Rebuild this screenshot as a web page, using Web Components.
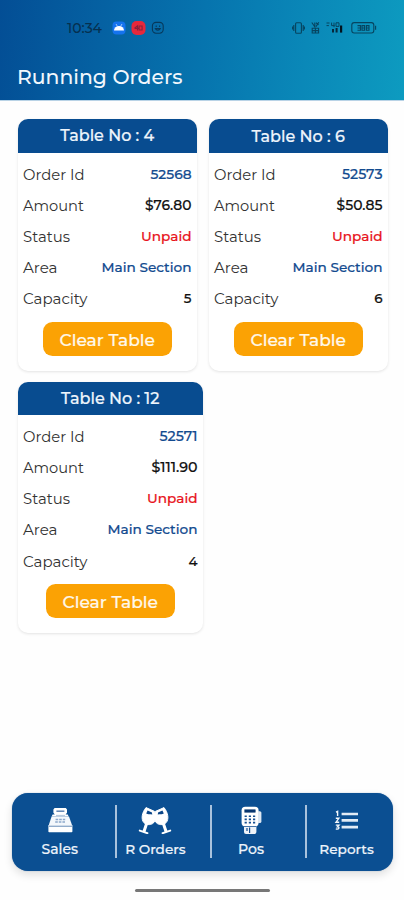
<!DOCTYPE html>
<html lang="en">
<head>
<meta charset="utf-8">
<title>Running Orders</title>
<style>
  html, body { margin: 0; padding: 0; }
  body { width: 404px; height: 900px; overflow: hidden; background: #fefefe; font-family: Montserrat, Inter, "Noto Sans", sans-serif; }
</style>
</head>
<body>
<orders-screen></orders-screen>
<script>
const attach = (el, html) => {
  el.attachShadow({ mode: 'open' }).innerHTML = html;
  return el.shadowRoot;
};

/* A single line of text whose font size is tuned so that it fills the width "w". */
customElements.define('fit-text', class extends HTMLElement {
  connectedCallback() {
    const w = parseFloat(this.getAttribute('w'));
    const root = attach(this, `<style>
      :host { display: block; flex: none; white-space: nowrap; line-height: 20px; height: 20px; }
      span { display: inline-block; }
    </style><span><slot></slot></span>`);
    if (!w) return;
    const span = root.querySelector('span');
    const size = parseFloat(getComputedStyle(span).fontSize);
    span.style.fontSize = size * w / span.getBoundingClientRect().width + 'px';
  }
});

customElements.define('status-bar', class extends HTMLElement {
  connectedCallback() {
    attach(this, `<style>
      :host { display: flex; align-items: center; height: 14px; padding: 21px 27px 0 67px; color: #06304f; }
      fit-text { font-size: 13px; font-weight: 500; width: 35px; }
      svg { display: block; flex: none; }
      .apps { display: flex; gap: 5px; margin-left: 10px; }
      .sys { display: flex; align-items: center; gap: 6px; margin-left: auto; }
    </style>
    <fit-text w="35">10:34</fit-text>
    <div class="apps">
      <svg width="14" height="14" viewBox="0 0 14 14"><rect x=".5" y=".5" width="13" height="13" rx="4" fill="#1473ee"/><path d="M2 9.5a5 4.6 0 0 1 10 0z" fill="#fff"/><path d="M4 3l1.2 2M10 3L8.8 5" stroke="#c5dcfb" stroke-width=".8"/></svg>
      <svg width="15" height="14" viewBox="0 0 14 14"><rect width="14" height="14" rx="5" fill="#e5283c"/><path d="M3 7.2l3-2.4v4.6M7.6 5h3v4h-3zM3 7.4h4.5" fill="none" stroke="#87213c" stroke-width="1.1"/></svg>
      <svg width="14" height="14" viewBox="0 0 14 14" fill="none" stroke="#07395b" stroke-width="1.1"><rect x="1.4" y="1.4" width="10.8" height="10.8" rx="3.6"/><path d="M4.3 7.6c1 2.2 4 2.2 5 0zM5.2 4.6v1.3M8.6 4.6v1.3"/></svg>
    </div>
    <div class="sys">
      <svg width="13" height="14" viewBox="0 0 13 14" fill="none" stroke="#07445f" stroke-width="1.1"><rect x="3.6" y="1.8" width="5.8" height="10.4" rx="1"/><path d="M1.8 4v6M.6 5.5v3M11.2 4v6M12.4 5.5v3"/></svg>
      <svg width="9" height="14" viewBox="0 0 9 14" fill="none" stroke="#07445f" stroke-width="1.1"><path d="M.8 1.5l3 4.2V1.6M5 1.8l2.6 2M7.8 1.2L5 5.6M1.2 7.2h6.4v4.8H1.2zM4.4 7v5M1.2 9.6h6.4"/></svg>
      <svg width="19" height="14" viewBox="0 0 19 14"><path d="M.5 2h3M.5 4.6h2.4M5.6 1.6v3h3M8 1.6v4.6M10 1.8h3v3.6h-3z" fill="none" stroke="#07445f"/><path d="M6 8h2v3.6H6zM9.6 7h2v4.6h-2z" fill="#06283c"/><path d="M14 4.5h2.2v7.1H14z" fill="#02141f"/></svg>
      <svg width="26" height="14" viewBox="0 0 26 14" fill="none" stroke="#07445f" stroke-width="1.1"><rect x=".8" y="1.6" width="22" height="10.4" rx="2.4"/><path d="M24.6 4.8v4M6.5 4.6h3v4.6h-3M6.5 7h3M11 4.6h2.6v4.6H11zM11 7h2.6M15.4 4.6H18v4.6h-2.6zM15.4 7H18" /></svg>
    </div>`);
  }
});

customElements.define('app-header', class extends HTMLElement {
  connectedCallback() {
    attach(this, `<style>
      :host { display: block; height: 101px; background: linear-gradient(96deg, #034e95 0%, #0561a2 25%, #0674ae 50%, #0a88b8 75%, #0d9bc0 100%); border-bottom: 1px solid #b9d3e6; box-sizing: border-box; }
      h1 { margin: 32px 0 0 17px; font-size: 20px; font-weight: 500; color: #f1f7fd; }
    </style>
    <status-bar></status-bar>
    <h1><fit-text w="165.5"><slot></slot></fit-text></h1>`);
  }
});

/* One label and value line of a card. */
customElements.define('info-row', class extends HTMLElement {
  connectedCallback() {
    const a = n => this.getAttribute(n);
    attach(this, `<style>
      :host { display: flex; justify-content: space-between; align-items: center; height: 31.1px; }
      .label { font-size: 14.2px; color: #333; font-weight: 400; }
      .value { font-size: 13.4px; font-weight: 500; color: ${a('tone') || '#111'}; padding-bottom: 2px; -webkit-text-stroke: .2px; }
    </style>
    <fit-text class="label" w="${a('lw')}">${a('label')}</fit-text>
    <fit-text class="value" w="${a('vw')}"><slot></slot></fit-text>`);
  }
});

customElements.define('clear-button', class extends HTMLElement {
  connectedCallback() {
    attach(this, `<style>
      :host { display: block; }
      button { display: flex; align-items: center; justify-content: center; width: 129.5px; height: 34px; border: 0; border-radius: 9.5px; background: #fba204; color: #fff8ea; font: 500 16.6px Montserrat, Inter, sans-serif; -webkit-text-stroke: .2px; padding: 2px 0 0 0; }
    </style>
    <button><fit-text w="95.5"><slot></slot></fit-text></button>`);
  }
});

customElements.define('table-card', class extends HTMLElement {
  connectedCallback() {
    const a = n => this.getAttribute(n);
    attach(this, `<style>
      :host { display: flex; flex-direction: column; box-sizing: border-box; height: 251.5px; border-radius: 10px; background: #fff; box-shadow: 0 1px 3px rgba(0,0,0,.11); overflow: hidden; }
      header { display: flex; align-items: center; justify-content: center; height: 33.5px; padding-top: 1px; box-sizing: border-box; background: #084c90; color: #eef5fc; font-size: 15px; font-weight: 500; -webkit-text-stroke: .2px; }
      .rows { padding: 6.6px 5.5px 0 5.5px; }
      clear-button { align-self: center; margin-top: 7.4px; }
    </style>
    <header><fit-text w="${a('tw')}">Table No : ${a('no')}</fit-text></header>
    <div class="rows">
      <info-row label="Order Id" lw="61.5" vw="${a('iw')}" tone="#134b8f">${a('order')}</info-row>
      <info-row label="Amount" lw="61" vw="${a('aw')}">${a('amount')}</info-row>
      <info-row label="Status" lw="47" vw="50.5" tone="#e8131b">Unpaid</info-row>
      <info-row label="Area" lw="34.5" vw="90" tone="#134b8f">Main Section</info-row>
      <info-row label="Capacity" lw="64.5" vw="0">${a('cap')}</info-row>
    </div>
    <clear-button>Clear Table</clear-button>`);
  }
});

const icons = {
  sales: `<path d="M8.6 2h11.2l1.2 1.4v3.4L19.6 8.6h2.2l.8 2H5.6l1-2h2.2L7.4 6.8V3.4z" fill="#fff"/><path d="M5.6 10.4h17.4l3 8.6H2.8z" fill="#f4f8fc"/><path d="M10.4 5.2h8" stroke="#5d83b3" stroke-width="1.5"/><path d="M10 9.4h9" stroke="#9db5d2" stroke-width=".8"/><path d="M9.6 13.4h9.6M9.2 15.9h10.4" stroke="#8ca8ca" stroke-width="1.5" stroke-dasharray="2.6 1"/><path d="M2.4 19h24v6.4q0 .8-.8.8H3.2q-.8 0-.8-.8z" fill="#fff"/><path d="M3 20.2h23" stroke="#4f7aae" stroke-width=".9"/>`,
  glasses: `<g fill="#fff" stroke="#fff" stroke-linejoin="round"><path d="M8 1.6l8.6 3.8c1.6 6.2.8 10.6-2 12.2-2.4 1.6-6.6 1.4-8.8-1-3-3.6-1.8-10 2.2-15z"/><path d="M8.8 17l-3 9" stroke-width="3"/><path d="M1.8 24.6l7.6 2.6" stroke-width="2" stroke-linecap="round"/><path d="M26 1.6l-8.6 3.8c-1.6 6.2-.8 10.6 2 12.2 2.4 1.6 6.6 1.4 8.8-1 3-3.6 1.8-10-2.2-15z"/><path d="M25.2 17l3 9" stroke-width="3"/><path d="M32.2 24.6l-7.6 2.6" stroke-width="2" stroke-linecap="round"/></g><path d="M9.6 4.6l4.4 1.8.2 2.4c-1.8-1.4-3.6.4-6-1.2zM24.4 4.6L20 6.4l-.2 2.4c1.8-1.4 3.6.4 6-1.2z" fill="#0b4689"/><path d="M15.6 18.6L17 16l1.4 2.6z" fill="#0b4f92"/>`,
  pos: `<rect x="4.6" y=".8" width="17" height="19.6" rx="3.6" fill="#fff"/><path d="M21 5.2h1.8q1.6 0 1.6 1.6v8.6q0 1.6-1.6 1.6H21z" fill="#dde7f2"/><path d="M7.4 3.4h11.2v3.2H7.4z" fill="#08366f"/><g fill="#174f91"><path d="M7.6 9.4h2.2v1.6H7.6zM11.8 9.4h2.2v1.6h-2.2zM16 9.4h2.2v1.6H16zM7.6 12.6h2.2v1.6H7.6zM11.8 12.6h2.2v1.6h-2.2zM16 12.6h2.2v1.6H16zM7.6 15.8h2.2v1.6H7.6zM11.8 15.8h2.2v1.6h-2.2zM16 15.8h2.2v1.6H16z"/></g><path d="M7 20h12.4v6q0 2-2 2H9q-2 0-2-2z" fill="#eef3f9"/><path d="M7 20.5h12.4" stroke="#1b5596" stroke-width=".8"/><path d="M10 22v3M12.6 21.6v5.4" stroke="#174f91" stroke-width="1.2"/>`,
  list: `<path d="M8.6 8h16.4M8.6 14.4h16.4M8.6 21.1h16.4" stroke="#e2ebf5" stroke-width="2.6"/><path d="M3 6.1l1.6-.7V10M2.8 12.3h3L3 16.3h3.2M2.8 19.1H6L4.4 20.9c2.6 0 1.8 2.8-1.6 2" fill="none" stroke="#f4f8fc" stroke-width="1.4"/>`
};

customElements.define('nav-item', class extends HTMLElement {
  connectedCallback() {
    const [w, h] = this.getAttribute('icon') === 'glasses' ? [34, 28] : [28, 28];
    attach(this, `<style>
      :host { display: flex; flex-direction: column; align-items: center; padding-top: 13px; box-sizing: border-box; font-size: 12.8px; font-weight: 500; color: #eef4fb; -webkit-text-stroke: .2px; }
      svg { display: block; }
      fit-text { margin-top: 5.4px; }
    </style>
    <svg width="${w}" height="${h}" viewBox="0 0 ${w} ${h}">${icons[this.getAttribute('icon')]}</svg>
    <fit-text w="${this.getAttribute('w')}"><slot></slot></fit-text>`);
  }
});

customElements.define('bottom-nav', class extends HTMLElement {
  connectedCallback() {
    attach(this, `<style>
      :host {
        --line: linear-gradient(#a9c2dd, #a9c2dd);
        display: grid; grid-template-columns: repeat(4, 95.6px); box-sizing: border-box; padding-left: .5px;
        height: 78px; border-radius: 16px;
        background: var(--line) 103px 12px / 2px 53px no-repeat, var(--line) 198px 12px / 2px 53px no-repeat, var(--line) 293.5px 12px / 2px 53px no-repeat, #0b4f92;
        box-shadow: 0 4px 8px rgba(0,0,0,.12), 0 0 1px #6e97c2;
      }
    </style><slot></slot>`);
  }
});

customElements.define('orders-screen', class extends HTMLElement {
  connectedCallback() {
    attach(this, `<style>
      :host { display: flex; flex-direction: column; width: 404px; height: 900px; }
      .cards { display: flex; flex-wrap: wrap; gap: 11px 11.5px; align-content: flex-start; padding: 18px 16px 0 17.5px; flex: 1; }
      table-card { width: 179.5px; }
      table-card.wide { width: 185.5px; }
      bottom-nav { margin: 0 11px 0 11.5px; }
      .home { align-self: center; width: 135px; height: 3px; margin: 18px 0 8px; border-radius: 2px; background: #777; }
    </style>
    <app-header>Running Orders</app-header>
    <div class="cards">
      <table-card no="4" tw="94" order="52568" iw="41" amount="$76.80" aw="46.5" cap="5"></table-card>
      <table-card no="6" tw="93.5" order="52573" iw="40.5" amount="$50.85" aw="46" cap="6"></table-card>
      <table-card class="wide" no="12" tw="98.5" order="52571" iw="38" amount="$111.90" aw="46" cap="4"></table-card>
    </div>
    <bottom-nav>
      <nav-item icon="sales" w="36.5">Sales</nav-item>
      <nav-item icon="glasses" w="60.5">R Orders</nav-item>
      <nav-item icon="pos" w="26">Pos</nav-item>
      <nav-item icon="list" w="54.5">Reports</nav-item>
    </bottom-nav>
    <div class="home"></div>`);
  }
});
</script>
</body>
</html>
